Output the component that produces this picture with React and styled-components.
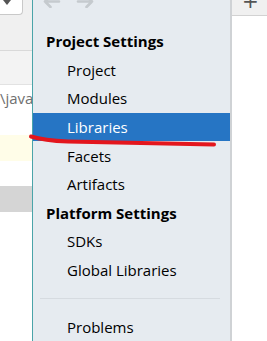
import React from "react";
import styled, { createGlobalStyle } from "styled-components";

const GlobalStyle = createGlobalStyle`
  html, body {
    margin: 0;
    padding: 0;
    background: #ffffff;
  }
  body {
    font-family: "Open Sans", "Noto Sans", sans-serif;
  }
`;

const Frame = styled.div`
  position: relative;
  display: flex;
  width: 267px;
  height: 341px;
  overflow: hidden;
`;

const EditorStrip = styled.div`
  display: flex;
  flex-direction: column;
  width: 32px;
  flex-shrink: 0;
  overflow: hidden;
`;

const Band = styled.div`
  height: ${(p) => p.h}px;
  flex-shrink: 0;
  background: ${(p) => p.bg || "#ffffff"};
  border-bottom: ${(p) => (p.line ? `1px solid ${p.line}` : "none")};
  display: flex;
  align-items: center;
  overflow: hidden;
`;

const ComboRow = styled.div`
  display: flex;
  height: 16px;
  background: #f0f0f0;
  flex-shrink: 0;
`;

const Combo = styled.div`
  width: 23px;
  height: 15px;
  background: #ffffff;
  border: 1px solid #c9c9c9;
  border-top: none;
  border-left: none;
  border-bottom-right-radius: 4px;
  display: flex;
  justify-content: flex-start;
  padding-left: 3px;
  box-sizing: border-box;
`;

const ComboArrow = styled.div`
  width: 0;
  height: 0;
  border-left: 4px solid transparent;
  border-right: 4px solid transparent;
  border-top: 5px solid #555555;
`;

const PathText = styled.span`
  font-size: 15px;
  color: #707070;
  white-space: nowrap;
  margin-left: 0;
`;

const Sidebar = styled.div`
  display: flex;
  flex-direction: column;
  width: 197px;
  flex-shrink: 0;
  background: #e6ebf0;
  border-left: 1px solid #4aa4a9;
  border-right: 2px solid #cfd2d5;
`;

const Toolbar = styled.div`
  display: flex;
  gap: 15px;
  height: 27px;
  padding-left: 9px;
  flex-shrink: 0;
`;

const NavArrow = styled.svg`
  margin-top: -5px;
  transform: ${(p) => (p.flip ? "scaleX(-1)" : "none")};
`;

const Header = styled.div`
  height: 28.6px;
  display: flex;
  align-items: center;
  padding-left: 13px;
  font-size: 15px;
  font-weight: 700;
  color: #000000;
  flex-shrink: 0;
`;

const Item = styled.div`
  height: 28.6px;
  display: flex;
  align-items: center;
  padding-left: 34px;
  font-size: 15px;
  color: ${(p) => (p.selected ? "#ffffff" : "#000000")};
  background: ${(p) => (p.selected ? "#2675c4" : "transparent")};
  flex-shrink: 0;
`;

const SeparatorRow = styled.div`
  height: 28.6px;
  display: flex;
  align-items: center;
  padding: 0 10px 0 7px;
  flex-shrink: 0;
`;

const Rule = styled.div`
  flex: 1;
  height: 1px;
  background: #d6dbe0;
`;

const RightPane = styled.div`
  flex: 1;
  display: flex;
  flex-direction: column;
`;

const TabBar = styled.div`
  height: 15px;
  background: #f0f0f0;
  border-bottom: 1px solid #d2d2d2;
  display: flex;
  padding-left: 10px;
`;

const Plus = styled.span`
  font-size: 20px;
  line-height: 8px;
  color: #555555;
  font-family: "DejaVu Sans", sans-serif;
  margin-top: -3px;
`;

const Underline = styled.svg`
  position: absolute;
  left: 0;
  top: 0;
  pointer-events: none;
`;

const projectItems = ["Project", "Modules", "Libraries", "Facets", "Artifacts"];
const platformItems = ["SDKs", "Global Libraries"];

function Arrow({ flip }) {
  return (
    <NavArrow flip={flip} width="19" height="13" viewBox="0 0 19 13">
      <path
        d="M17 6.5 H3 M8.5 1 L3 6.5 L8.5 12"
        fill="none"
        stroke="#c5cace"
        strokeWidth="2.6"
        strokeLinecap="round"
        strokeLinejoin="round"
      />
    </NavArrow>
  );
}

export default function App() {
  return (
    <Frame>
      <GlobalStyle />
      <EditorStrip>
        <ComboRow>
          <Combo>
            <ComboArrow />
          </Combo>
        </ComboRow>
        <Band h={34} bg="#f0f0f0" line="#d9d9d9" />
        <Band h={33} bg="#f3f3f3" line="#e2e2e2" />
        <Band h={26}>
          <PathText>\java</PathText>
        </Band>
        <Band h={24} bg="#ffffff" />
        <Band h={26} bg="#fffde8" />
        <Band h={25} />
        <Band h={26} bg="#d5d5d5" />
      </EditorStrip>
      <Sidebar>
        <Toolbar>
          <Arrow />
          <Arrow flip />
        </Toolbar>
        <Header>Project Settings</Header>
        {projectItems.map((name) => (
          <Item key={name} selected={name === "Libraries"}>
            {name}
          </Item>
        ))}
        <Header>Platform Settings</Header>
        {platformItems.map((name) => (
          <Item key={name}>{name}</Item>
        ))}
        <SeparatorRow>
          <Rule />
        </SeparatorRow>
        <Item>Problems</Item>
      </Sidebar>
      <RightPane>
        <TabBar>
          <Plus>+</Plus>
        </TabBar>
      </RightPane>
      <Underline width="267" height="341" viewBox="0 0 267 341">
        <path
          d="M31 136.5 Q 44 140.5 68 141.5 L 214 144.5"
          fill="none"
          stroke="#e3161d"
          strokeWidth="4"
          strokeLinecap="round"
        />
      </Underline>
    </Frame>
  );
}
